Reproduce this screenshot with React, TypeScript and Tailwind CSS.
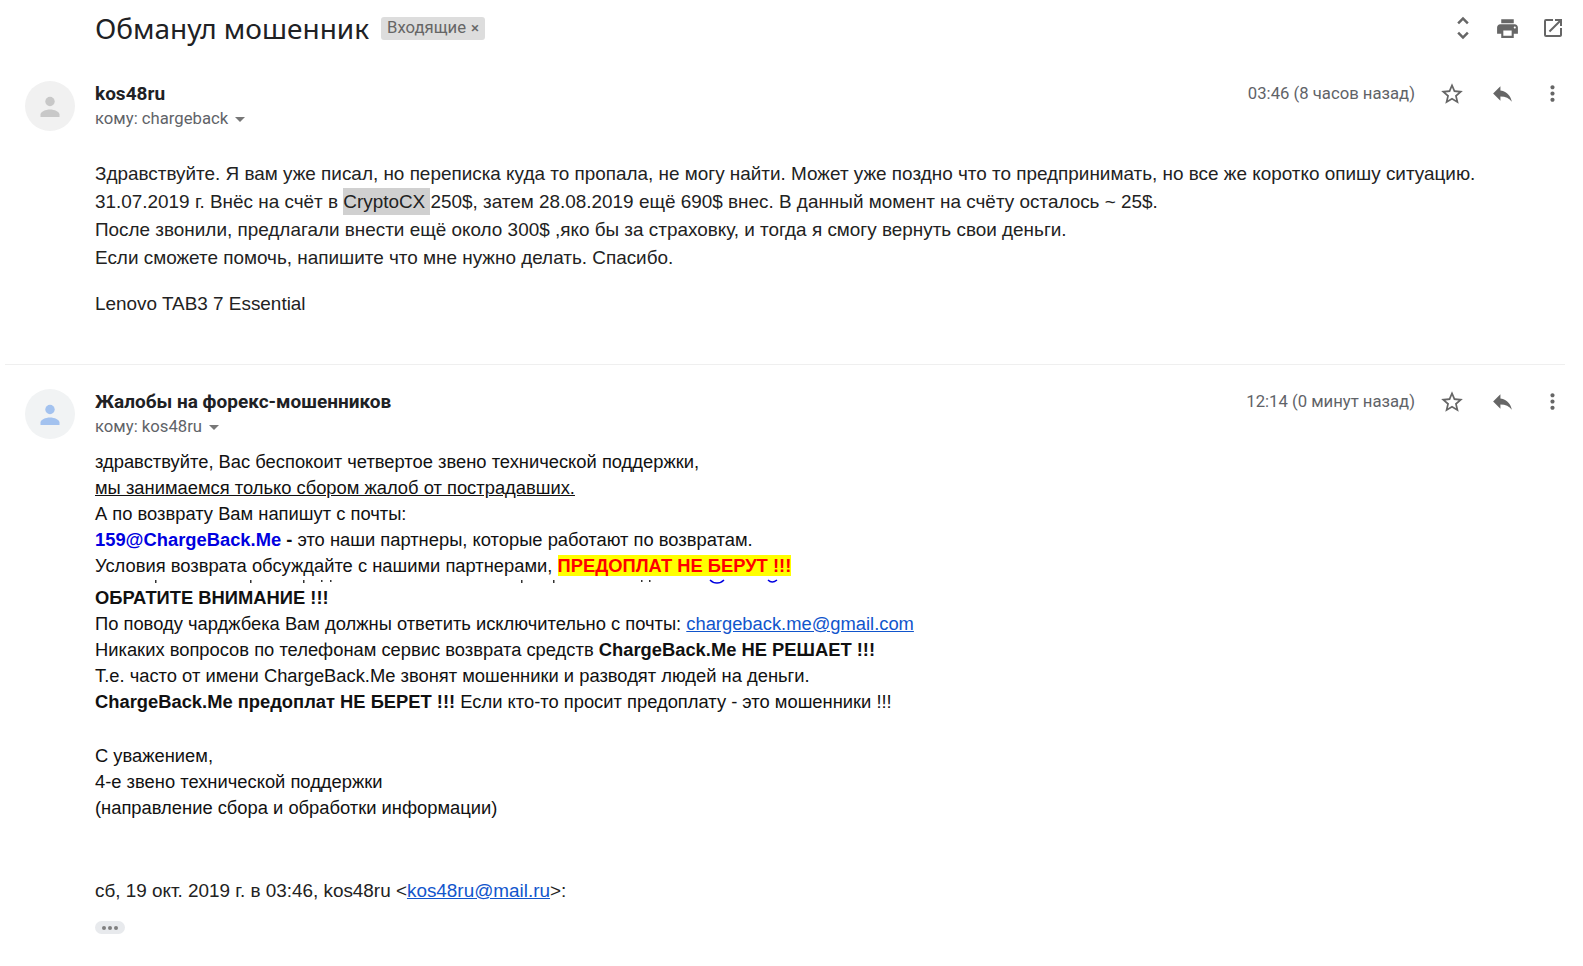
import React from 'react';
import { MdUnfoldMore, MdPrint, MdOpenInNew, MdStarBorder, MdReply, MdMoreVert, MdArrowDropDown } from 'react-icons/md';

const MessageHead = ({ name, to, date, tint }: { name: string; to: string; date: string; tint: string }) => (
  <div className="flex h-[50px] pl-[25px]">
    <div className={`w-[50px] h-[50px] rounded-full ${tint === 'blue' ? 'bg-[#f1f3f4] text-[#a3c2ef]' : 'bg-[#f1f1f1] text-[#c8c8c8]'}`}>
      <svg width="50" height="50" viewBox="0 0 50 50" fill="currentColor">
        <circle cx="25" cy="20.5" r="4.7" />
        <path d="M15.5 36v-2.5c0-2.8 5-5 9.5-5s9.5 2.200 9.500 5V36z" />
      </svg>
    </div>
    <div className="ml-5 flex-1">
      <div className="font-['Roboto',sans-serif] font-bold text-[19px] leading-[25px] text-[#202124]">{name}</div>
      <div className="flex items-center font-['Roboto',sans-serif] text-[16.7px] leading-[25px] text-[#5f6368]">
        кому: {to}
        <MdArrowDropDown size={24} className="text-[#777]" />
      </div>
    </div>
    <div className="flex h-[25px] items-center text-[#666]">
      <span className="font-['Roboto',sans-serif] text-[16.7px] mr-[12px] text-[#5f6368]">{date}</span>
      <span className="w-[50px] flex justify-center"><MdStarBorder size={26} /></span>
      <span className="w-[50px] flex justify-center"><MdReply size={25} /></span>
      <span className="w-[50px] flex justify-center"><MdMoreVert size={25} /></span>
    </div>
    <div className="w-[6px]" />
  </div>
);

export default function App() {
  return (
    <div className="w-[1583px] h-[966px] overflow-hidden bg-white font-['Liberation_Sans',Arial,sans-serif] text-[#222]">
      <div className="flex h-[56px] items-center pl-[95px] pr-[7px]">
        <h1 className="font-['Noto_Sans',sans-serif] text-[28px] text-[#202124]">Обманул мошенник</h1>
        <span className="ml-[12px] flex h-[23px] items-center rounded-[3px] bg-[#dddddd] px-[6px] font-['Roboto',sans-serif] text-[16.7px] text-[#666]">
          Входящие <span className="ml-[5px] text-[15px] font-medium">×</span>
        </span>
        <div className="ml-auto flex items-center text-[#666]">
          <span className="w-[43px] flex justify-center"><MdUnfoldMore size={30} /></span>
          <span className="w-[46px] flex justify-center"><MdPrint size={25} /></span>
          <span className="w-[46px] flex justify-center"><MdOpenInNew size={24} /></span>
        </div>
      </div>

      <div className="pt-[25px]">
        <MessageHead name="kos48ru" to="chargeback" date="03:46 (8 часов назад)" tint="gray" />
        <div className="pl-[95px] pt-[29px] text-[18.91px] leading-[28px]">
          <div>Здравствуйте. Я вам уже писал, но переписка куда то пропала, не могу найти. Может уже поздно что то предпринимать, но все же коротко опишу ситуацию.</div>
          <div>31.07.2019 г. Внёс на счёт в <span className="bg-[#d0d0d0] py-[3px]">CryptoCX </span>250$, затем 28.08.2019 ещё 690$ внес. В данный момент на счёту осталось ~ 25$.</div>
          <div>После звонили, предлагали внести ещё около 300$ ,яко бы за страховку, и тогда я смогу вернуть свои деньги.</div>
          <div>Если сможете помочь, напишите что мне нужно делать. Спасибо.</div>
          <div className="mt-[18px]">Lenovo TAB3 7 Essential</div>
        </div>
      </div>

      <div className="ml-[5px] mr-[18px] mt-[46px] h-px bg-[#efefef]" />

      <div className="pt-[24px]">
        <MessageHead name="Жалобы на форекс-мошенников" to="kos48ru" date="12:14 (0 минут назад)" tint="blue" />
        <div className="pl-[95px] pt-[10px] text-[18.35px] leading-[26px] text-[#111]">
          <div>здравствуйте, Вас беспокоит четвертое звено технической поддержки,</div>
          <div className="underline">мы занимаемся только сбором жалоб от пострадавших.</div>
          <div>А по возврату Вам напишут с почты:</div>
          <div><b className="text-[#0000e0]">159@ChargeBack.Me</b> <b>-</b> это наши партнеры, которые работают по возвратам.</div>
          <div>Условия возврата обсуждайте с нашими партнерами, <b className="bg-[#ffff00] text-[#ff0000]">ПРЕДОПЛАТ НЕ БЕРУТ !!!</b></div>
          {/* descender fragments of a line cut off in the screenshot */}
          <svg width="700" height="6" className="block">
            <g fill="#333">
              <rect x="60" y="1" width="1.500" height="3" />
              <rect x="155" y="1" width="1.500" height="3" />
              <rect x="208" y="1" width="1.500" height="3" />
              <rect x="226" y="1" width="1.500" height="2" />
              <rect x="235" y="1" width="1.500" height="2" />
              <rect x="426" y="1" width="1.500" height="3" />
              <rect x="458" y="1" width="1.500" height="3" />
              <rect x="546" y="1" width="1.500" height="2" />
              <rect x="554" y="1" width="1.500" height="2" />
            </g>
            <path d="M615 1q3 3 7 3t7-3M673 1q4 4 9 0" fill="none" stroke="#0000e0" strokeWidth="1.5" />
          </svg>
          <div className="font-bold">ОБРАТИТЕ ВНИМАНИЕ !!!</div>
          <div>По поводу чарджбека Вам должны ответить исключительно с почты: <a className="text-[#1155cc] underline">chargeback.me@gmail.com</a></div>
          <div>Никаких вопросов по телефонам сервис возврата средств <b>ChargeBack.Me НЕ РЕШАЕТ !!!</b></div>
          <div>Т.е. часто от имени ChargeBack.Me звонят мошенники и разводят людей на деньги.</div>
          <div><b>ChargeBack.Me предоплат НЕ БЕРЕТ !!!</b> Если кто-то просит предоплату - это мошенники !!!</div>
          <div className="mt-[28px]">С уважением,</div>
          <div>4-е звено технической поддержки</div>
          <div>(направление сбора и обработки информации)</div>
          <div className="mt-[57px] text-[18.9px] text-[#222]">сб, 19 окт. 2019 г. в 03:46, kos48ru &lt;<a className="text-[#1155cc] underline">kos48ru@mail.ru</a>&gt;:</div>
          <div className="mt-[17px] flex h-[13px] w-[30px] items-center justify-center gap-[2px] rounded-full bg-[#e8eaed]">
            <span className="h-[4px] w-[4px] rounded-full bg-[#808080]" />
            <span className="h-[4px] w-[4px] rounded-full bg-[#808080]" />
            <span className="h-[4px] w-[4px] rounded-full bg-[#808080]" />
          </div>
        </div>
      </div>
    </div>
  );
}
